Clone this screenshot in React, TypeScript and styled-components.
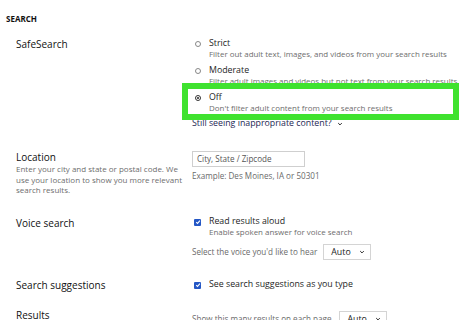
import { FC, ReactNode } from 'react';
import styled, { createGlobalStyle } from 'styled-components';

const GlobalStyle = createGlobalStyle`
    html, body {
        margin: 0;
        padding: 0;
        background: #ffffff;
    }
    body {
        font-family: 'Open Sans', 'Noto Sans', sans-serif;
        color: #222222;
    }
`;

const Page = styled.div`
    position: relative;
    width: 460px;
    height: 320px;
    overflow: hidden;
    padding-top: 14px;
    box-sizing: border-box;
`;

const SectionTitle = styled.div`
    margin-left: 6px;
    font-size: 8px;
    font-weight: 700;
    line-height: 10px;
    color: #111111;
`;

const Row = styled.div<{ $top: number }>`
    display: grid;
    grid-template-columns: 176px 1fr;
    padding-left: 16px;
    margin-top: ${(props) => props.$top}px;
`;

const Label = styled.div`
    font-size: 10px;
    line-height: 14px;
    color: #111111;
`;

const LabelHint = styled.div`
    width: 170px;
    font-size: 8px;
    line-height: 10.5px;
    color: #6e6e6e;
`;

const Control = styled.div<{ $pad?: number }>`
    display: flex;
    flex-direction: column;
    align-items: flex-start;
    padding-top: ${(props) => props.$pad ?? 0}px;
`;

const Option = styled.div<{ $gap?: number }>`
    position: relative;
    display: grid;
    grid-template-columns: 14px auto;
    padding-left: 3px;
    margin-bottom: ${(props) => props.$gap ?? 0}px;
`;

const OptionLabel = styled.div`
    font-size: 8.8px;
    line-height: 11px;
    color: #1e1e1e;
`;

const OptionHint = styled.div`
    grid-column: 2;
    font-size: 7.95px;
    line-height: 10px;
    color: #6e6e6e;
    white-space: nowrap;
`;

const Radio = styled.span<{ $checked?: boolean }>`
    position: relative;
    margin-top: 3px;
    width: 6px;
    height: 6px;
    border-radius: 50%;
    border: 1px solid ${(props) => (props.$checked ? '#333333' : '#888888')};
    box-sizing: border-box;

    &::after {
        content: '';
        display: ${(props) => (props.$checked ? 'block' : 'none')};
        position: absolute;
        left: 1px;
        top: 1px;
        width: 2px;
        height: 2px;
        border-radius: 50%;
        background: #222222;
    }
`;

const Highlight = styled.div`
    position: absolute;
    left: -10px;
    top: -9px;
    width: 277px;
    height: 37px;
    border: 6px solid #3fe22f;
    box-sizing: border-box;
    pointer-events: none;
`;

const MoreLink = styled.div`
    display: flex;
    align-items: center;
    gap: 5px;
    margin-top: 5px;
    font-size: 8.8px;
    line-height: 11px;
    color: #1d2754;
`;

const TextInput = styled.div`
    width: 113px;
    height: 16px;
    border: 1px solid #cfcfcf;
    box-sizing: border-box;
    padding-left: 4px;
    font-size: 8.1px;
    line-height: 14px;
    color: #555555;
`;

const Note = styled.div<{ $top?: number }>`
    margin-top: ${(props) => props.$top ?? 0}px;
    font-size: 8.1px;
    line-height: 10px;
    color: #6a6a6a;
`;

const InlineRow = styled.div<{ $top?: number; $gap?: number }>`
    display: flex;
    align-items: center;
    gap: ${(props) => props.$gap ?? 6}px;
    margin-top: ${(props) => props.$top ?? 0}px;
    font-size: 8.1px;
    color: #6a6a6a;
`;

const Select = styled.div`
    display: flex;
    align-items: center;
    justify-content: space-between;
    width: 48px;
    height: 16px;
    padding: 0 5px 0 7px;
    border: 1px solid #d4d4d4;
    box-sizing: border-box;
    font-size: 8.8px;
    color: #222222;
`;

const Check = styled.span`
    display: flex;
    align-items: center;
    justify-content: center;
    margin-top: 3px;
    margin-left: -1px;
    width: 7px;
    height: 7px;
    border-radius: 1px;
    background: #2457c5;
`;

const Chevron: FC<{ size?: number }> = ({ size = 6 }) => (
    <svg width={size} height={size} viewBox='0 0 10 10'>
        <path d='M2 3.5 L5 6.5 L8 3.5' fill='none' stroke='#222' strokeWidth='1.6' />
    </svg>
);

const CheckBox: FC = () => (
    <Check>
        <svg width='6' height='6' viewBox='0 0 10 10'>
            <path d='M2 5.2 L4.2 7.4 L8.2 2.8' fill='none' stroke='#fff' strokeWidth='1.8' />
        </svg>
    </Check>
);

interface ChoiceProps {
    kind: 'radio' | 'check';
    checked?: boolean;
    label: string;
    hint?: string;
    gap?: number;
    children?: ReactNode;
}

const Choice: FC<ChoiceProps> = ({ kind, checked, label, hint, gap, children }) => (
    <Option $gap={gap}>
        {kind === 'radio' ? <Radio $checked={checked} /> : <CheckBox />}
        <OptionLabel>{label}</OptionLabel>
        {hint && <OptionHint>{hint}</OptionHint>}
        {children}
    </Option>
);

const App: FC = () => {
    return (
        <Page>
            <GlobalStyle />
            <SectionTitle>SEARCH</SectionTitle>

            <Row $top={13}>
                <Label>SafeSearch</Label>
                <Control $pad={1}>
                    <Choice
                        kind='radio'
                        label='Strict'
                        hint='Filter out adult text, images, and videos from your search results'
                        gap={6}
                    />
                    <Choice
                        kind='radio'
                        label='Moderate'
                        hint='Filter adult images and videos but not text from your search results'
                        gap={6}
                    />
                    <Choice
                        kind='radio'
                        checked
                        label='Off'
                        hint="Don't filter adult content from your search results"
                    >
                        <Highlight />
                    </Choice>
                    <MoreLink>
                        Still seeing inappropriate content?
                        <Chevron />
                    </MoreLink>
                </Control>
            </Row>

            <Row $top={21}>
                <div>
                    <Label>Location</Label>
                    <LabelHint>
                        Enter your city and state or postal code. We use your
                        location to show you more relevant search results.
                    </LabelHint>
                </div>
                <Control $pad={1}>
                    <TextInput>City, State / Zipcode</TextInput>
                    <Note $top={4}>Example: Des Moines, IA or 50301</Note>
                </Control>
            </Row>

            <Row $top={20}>
                <Label>Voice search</Label>
                <Control>
                    <Choice
                        kind='check'
                        label='Read results aloud'
                        hint='Enable spoken answer for voice search'
                    />
                    <InlineRow $top={7}>
                        Select the voice you'd like to hear
                        <Select>
                            Auto
                            <Chevron />
                        </Select>
                    </InlineRow>
                </Control>
            </Row>

            <Row $top={18}>
                <Label>Search suggestions</Label>
                <Control $pad={1}>
                    <Choice kind='check' label='See search suggestions as you type' />
                </Control>
            </Row>

            <Row $top={16}>
                <Label>Results</Label>
                <Control $pad={3}>
                    <InlineRow $gap={8}>
                        Show this many results on each page
                        <Select>
                            Auto
                            <Chevron />
                        </Select>
                    </InlineRow>
                </Control>
            </Row>
        </Page>
    );
};

export default App;
